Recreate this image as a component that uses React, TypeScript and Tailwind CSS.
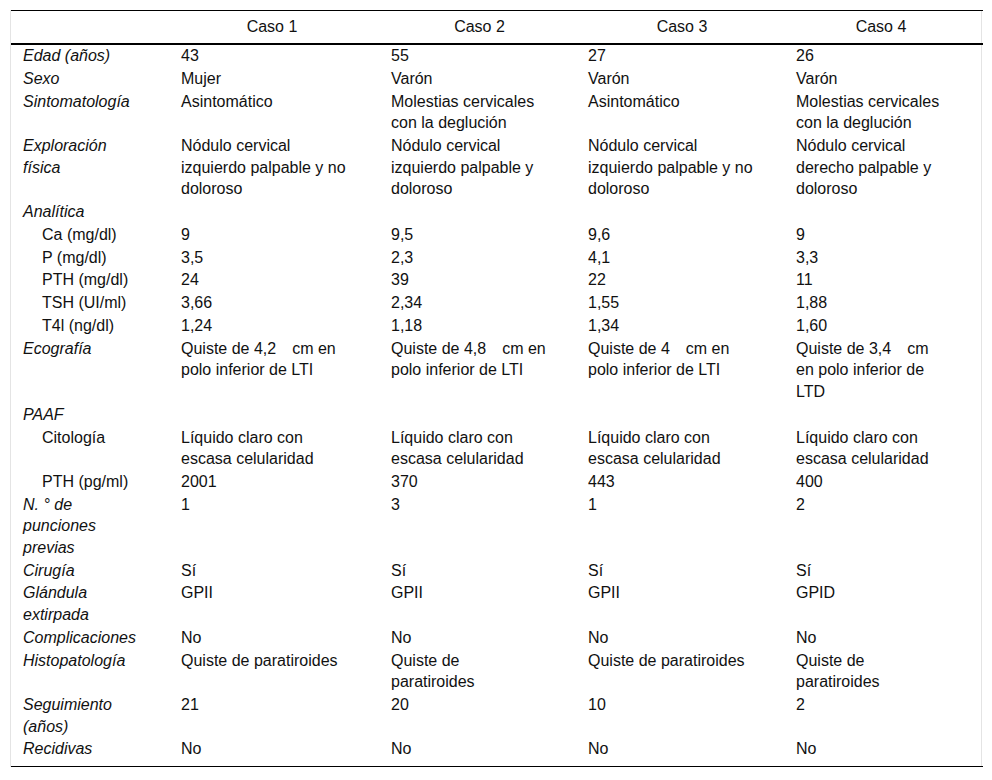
type Row = {
  label: string
  sub?: boolean
  values?: string[]
}

const rows: Row[] = [
  { label: 'Edad (años)', values: ['43', '55', '27', '26'] },
  { label: 'Sexo', values: ['Mujer', 'Varón', 'Varón', 'Varón'] },
  {
    label: 'Sintomatología',
    values: ['Asintomático', 'Molestias cervicales con la deglución', 'Asintomático', 'Molestias cervicales con la deglución'],
  },
  {
    label: 'Exploración física',
    values: [
      'Nódulo cervical izquierdo palpable y no doloroso',
      'Nódulo cervical izquierdo palpable y doloroso',
      'Nódulo cervical izquierdo palpable y no doloroso',
      'Nódulo cervical derecho palpable y doloroso',
    ],
  },
  { label: 'Analítica' },
  { label: 'Ca (mg/dl)', sub: true, values: ['9', '9,5', '9,6', '9'] },
  { label: 'P (mg/dl)', sub: true, values: ['3,5', '2,3', '4,1', '3,3'] },
  { label: 'PTH (mg/dl)', sub: true, values: ['24', '39', '22', '11'] },
  { label: 'TSH (UI/ml)', sub: true, values: ['3,66', '2,34', '1,55', '1,88'] },
  { label: 'T4l (ng/dl)', sub: true, values: ['1,24', '1,18', '1,34', '1,60'] },
  {
    label: 'Ecografía',
    values: [
      'Quiste de 4,2\u2003cm en polo inferior de LTI',
      'Quiste de 4,8\u2003cm en polo inferior de LTI',
      'Quiste de 4\u2003cm en polo inferior de LTI',
      'Quiste de 3,4\u2003cm en polo inferior de LTD',
    ],
  },
  { label: 'PAAF' },
  {
    label: 'Citología',
    sub: true,
    values: [
      'Líquido claro con escasa celularidad',
      'Líquido claro con escasa celularidad',
      'Líquido claro con escasa celularidad',
      'Líquido claro con escasa celularidad',
    ],
  },
  { label: 'PTH (pg/ml)', sub: true, values: ['2001', '370', '443', '400'] },
  { label: 'N.\u00a0° de punciones previas', values: ['1', '3', '1', '2'] },
  { label: 'Cirugía', values: ['Sí', 'Sí', 'Sí', 'Sí'] },
  { label: 'Glándula extirpada', values: ['GPII', 'GPII', 'GPII', 'GPID'] },
  { label: 'Complicaciones', values: ['No', 'No', 'No', 'No'] },
  {
    label: 'Histopatología',
    values: ['Quiste de paratiroides', 'Quiste de paratiroides', 'Quiste de paratiroides', 'Quiste de paratiroides'],
  },
  { label: 'Seguimiento (años)', values: ['21', '20', '10', '2'] },
  { label: 'Recidivas', values: ['No', 'No', 'No', 'No'] },
]

const colWidths = ['w-[160px]', 'w-[210px]', 'w-[197px]', 'w-[208px]', 'w-[197px]']

// right padding per case column (content widths differ slightly, matches the wrapping)
const cellPad = ['pr-[31px]', 'pr-[31px]', 'pr-[31px]', 'pr-[37px]']

const headers = [
  { label: 'Caso 1', cls: 'pl-[10px] pr-[18px]' },
  { label: 'Caso 2', cls: 'px-[10px]' },
  { label: 'Caso 3', cls: 'px-[10px]' },
  { label: 'Caso 4', cls: 'pl-[10px] pr-[17px]' },
]

export default function App() {
  return (
    <div className="min-h-screen bg-white pt-[10px] font-['Liberation_Sans',Arial,sans-serif] text-[16px] leading-[21.6px] text-[#111]">
      <div className="ml-[10px] w-[972px] border-x border-[#e4e4e4]">
        <table className="w-full table-fixed border-collapse border-b border-black">
          <colgroup>
            {colWidths.map((w) => (
              <col key={w} className={w} />
            ))}
          </colgroup>
          <thead>
            <tr className="border-t border-black border-b-2">
              <th />
              {headers.map((h) => (
                <th key={h.label} className={`${h.cls} py-[5px] text-center font-normal`}>
                  {h.label}
                </th>
              ))}
            </tr>
          </thead>
          <tbody>
            {rows.map((row, r) => {
              const last = r === rows.length - 1
              const pad = last ? 'pt-[0.6px] pb-[6px]' : 'py-[0.6px]'
              return (
                <tr key={row.label} className="align-top">
                  <td className={`${pad} pr-[31px] ${row.sub ? 'pl-[31px]' : 'pl-[12px] italic'}`}>
                    {row.label}
                  </td>
                  {(row.values ?? ['', '', '', '']).map((v, i) => (
                    <td key={i} className={`${pad} pl-[10px] ${cellPad[i]}`}>
                      {v}
                    </td>
                  ))}
                </tr>
              )
            })}
          </tbody>
        </table>
      </div>
    </div>
  )
}
